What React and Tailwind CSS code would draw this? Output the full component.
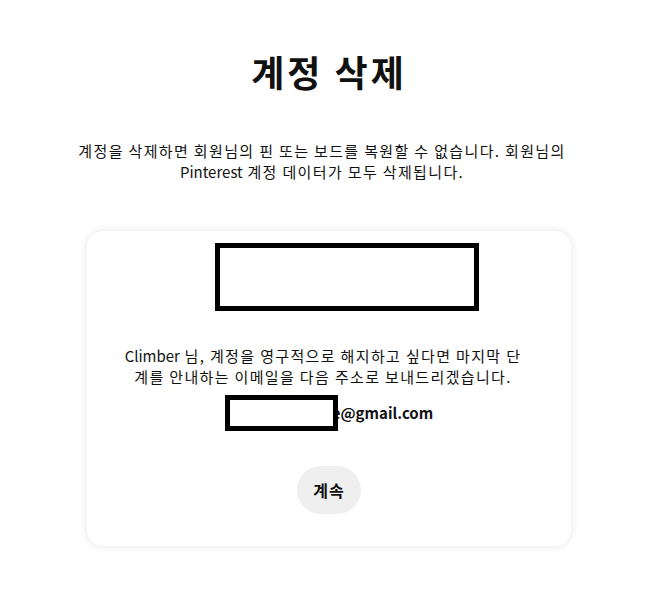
import React from "react";

const App = () => {
  return (
    <div
      className="min-h-screen w-full bg-white flex flex-col items-center text-[#111111]"
      style={{ fontFamily: '"Noto Sans CJK KR", "Noto Sans", sans-serif' }}
    >
      {/* Title */}
      <h1 className="mt-[44px] text-[36px] leading-[54px] font-bold tracking-[3px]">계정 삭제</h1>

      {/* Description */}
      <p className="mt-[42px] mr-[14px] text-center text-[15px] leading-[21px] tracking-[1.35px]">
        계정을 삭제하면 회원님의 핀 또는 보드를 복원할 수 없습니다. 회원님의
        <br />
        <span className="tracking-normal">Pinterest</span> 계정 데이터가 모두 삭제됩니다.
      </p>

      {/* Card */}
      <div className="mt-[49px] w-[484px] h-[315px] bg-white rounded-2xl shadow-[0_0_10px_rgba(0,0,0,0.1)] flex flex-col items-center">
        <div className="mt-[12px] ml-[36px] w-[264px] h-[68px] border-[5px] border-black" />

        <p className="mt-[34px] mr-[12px] text-center text-[15px] leading-[21px] tracking-[1.35px]">
          <span className="tracking-normal">Climber</span> 님, 계정을 영구적으로 해지하고 싶다면 마지막 단
          <br />
          계를 안내하는 이메일을 다음 주소로 보내드리겠습니다.
        </p>

        <div className="mt-[8px] flex items-center">
          <div className="relative z-10 w-[113px] h-[36px] border-[5px] border-black bg-white" />
          <span className="-ml-[6px] text-[15px] font-bold leading-[20px]">e@gmail.com</span>
        </div>

        <button className="mt-[35px] w-[64px] h-[48px] rounded-full bg-[#efefef] text-[16px] font-bold tracking-[1px] text-[#111111]">
          계속
        </button>
      </div>
    </div>
  );
};

export default App;
